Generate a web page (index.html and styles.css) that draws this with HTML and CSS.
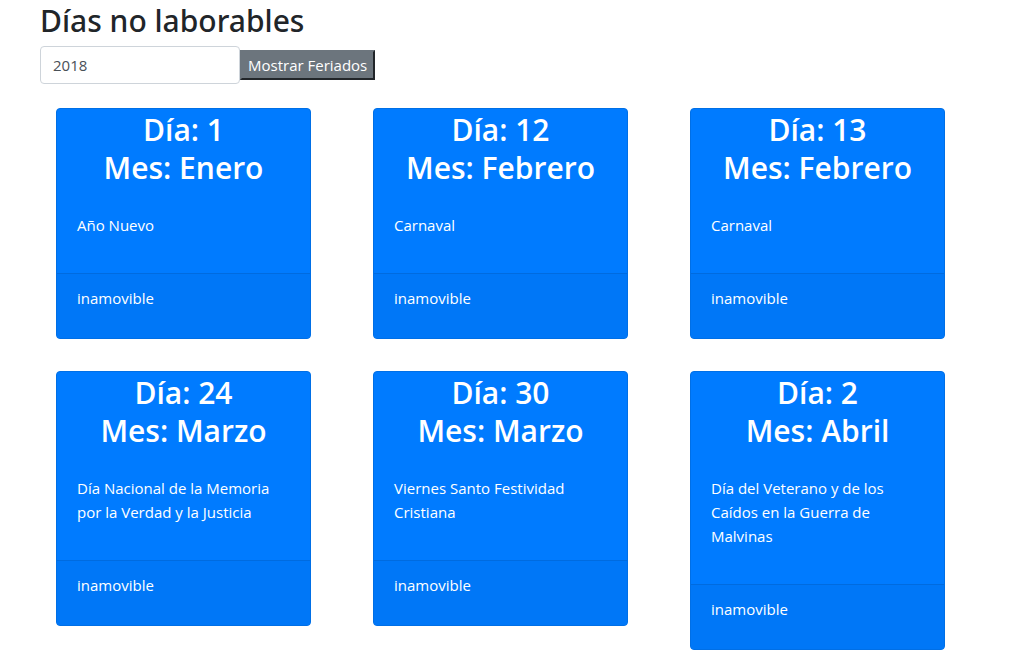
FILE: index.html
```html
<!DOCTYPE html>
<html lang="es">
<head>
<meta charset="utf-8">
<meta name="viewport" content="width=device-width, initial-scale=1">
<title>Días no laborables</title>
<link rel="stylesheet" href="styles.css">
</head>
<body>
<main class="page">
  <h1 class="title">Días no laborables</h1>
  <form class="search">
    <input class="year" type="text" value="2018" aria-label="Año">
    <button class="show" type="button">Mostrar Feriados</button>
  </form>
  <section class="cards">
    <article class="card">
      <h2 class="date">Día: 1<br>Mes: Enero</h2>
      <p class="reason">Año Nuevo</p>
      <p class="kind">inamovible</p>
    </article>
    <article class="card">
      <h2 class="date">Día: 12<br>Mes: Febrero</h2>
      <p class="reason">Carnaval</p>
      <p class="kind">inamovible</p>
    </article>
    <article class="card">
      <h2 class="date">Día: 13<br>Mes: Febrero</h2>
      <p class="reason">Carnaval</p>
      <p class="kind">inamovible</p>
    </article>
    <article class="card">
      <h2 class="date">Día: 24<br>Mes: Marzo</h2>
      <p class="reason">Día Nacional de la Memoria por la Verdad y la Justicia</p>
      <p class="kind">inamovible</p>
    </article>
    <article class="card">
      <h2 class="date">Día: 30<br>Mes: Marzo</h2>
      <p class="reason">Viernes Santo Festividad Cristiana</p>
      <p class="kind">inamovible</p>
    </article>
    <article class="card">
      <h2 class="date">Día: 2<br>Mes: Abril</h2>
      <p class="reason">Día del Veterano y de los Caídos en la Guerra de Malvinas</p>
      <p class="kind">inamovible</p>
    </article>
  </section>
</main>
</body>
</html>
```
FILE: styles.css
```css
* {
  box-sizing: border-box;
}

body {
  margin: 0;
  background: #fff;
  color: #212529;
  font-family: "Segoe UI", "Open Sans", "Noto Sans", sans-serif;
  font-size: 15px;
  line-height: 24px;
}

.page {
  padding: 0 45px 0 40px;
}

.title,
.date {
  margin: 0;
  padding: 2px 0 6px;
  font-size: 30px;
  font-weight: 600;
  line-height: 38px;
}

.title {
  font-family: "Segoe UI", "Noto Sans", "Open Sans", sans-serif;
  font-weight: 500;
}

.date {
  text-align: center;
}

.search {
  display: flex;
  align-items: center;
  margin-bottom: 24px;
}

.year {
  width: 200px;
  height: 38px;
  padding: 6px 12px;
  border: 1px solid #ced4da;
  border-radius: 4px;
  background: #fff;
  color: #495057;
  font: inherit;
}

.show {
  height: 30px;
  padding: 0 6px;
  border: 2px solid;
  border-color: #6c757d #212529 #212529 #6c757d;
  background: #6c757d;
  color: #fff;
  font: inherit;
}

.cards {
  display: grid;
  grid-template-columns: repeat(3, 1fr);
  gap: 32px 62px;
  align-items: start;
  padding: 0 46px 2px 16px;
}

.card {
  overflow: hidden;
  border: 1px solid #006fe6;
  border-radius: 4px;
  background: #007bff;
  color: #fff;
}

.reason {
  margin: 0;
  padding: 20px 20px 36px;
}

.kind {
  margin: 0;
  padding: 12px 20px 28px;
  border-top: 1px solid #006bdf;
  background: #0077f7;
}
```
